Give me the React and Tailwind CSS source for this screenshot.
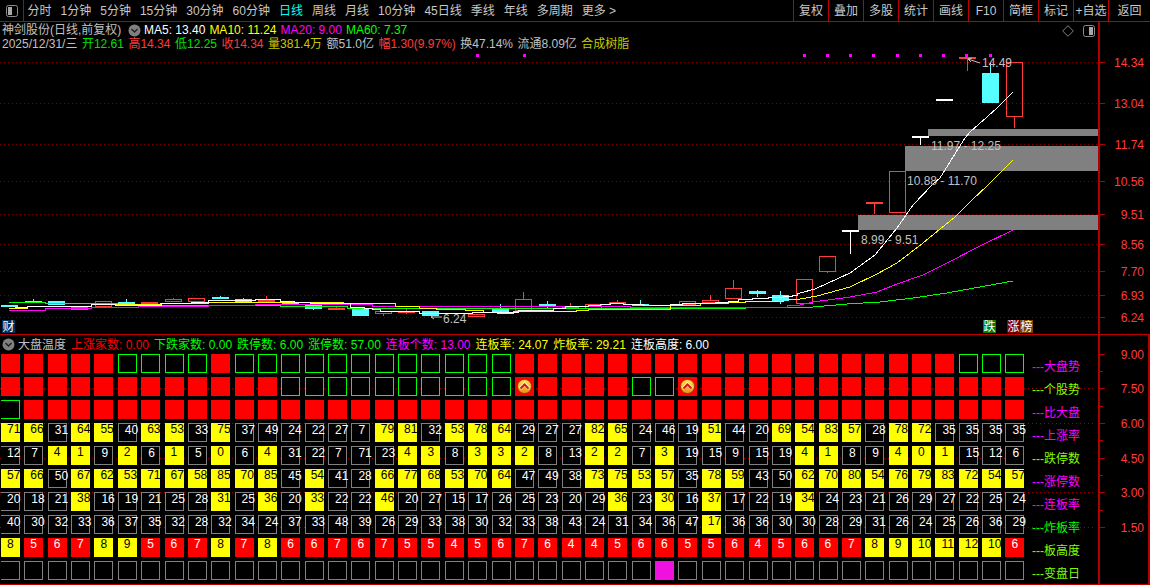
import React from 'react';

const leftTabs = ['分时', '1分钟', '5分钟', '15分钟', '30分钟', '60分钟', '日线', '周线', '月线', '10分钟', '45日线', '季线', '年线', '多周期', '更多 >'];
const rightTabs = ['复权', '叠加', '多股', '统计', '画线', 'F10', '简框', '标记', '+自选'];

const priceTicks = [
    ['14.34', 62], ['13.04', 103], ['11.74', 144], ['10.56', 181], ['9.51', 214],
    ['8.56', 244], ['7.70', 271], ['6.93', 295], ['6.24', 317],
];

// x, top, bottom, kind (c cyan, h hollow red, f filled red, w white), wick top, wick bottom
const candles = [
    [1, 305, 307, 'c'], [25, 301, 302.5, 'c', 299], [48, 301, 305, 'c'], [71, 307, 310, 'f'], [95, 301, 307, 'h'],
    [118, 302, 304.5, 'c', 299], [141, 302, 304.5, 'f'], [165, 299, 302, 'h', 298], [188, 298, 302, 'h'],
    [212, 297, 299, 'c', 296], [235, 299, 302, 'c', 298], [258, 300, 302, 'h', 296], [282, 302, 304.5, 'c'],
    [305, 305, 309, 'c', null, 310], [328, 308, 309, 'f', 306], [352, 309, 316, 'c'], [375, 311, 314, 'h', null, 316],
    [398, 311, 311.5, 'f', 309, 314], [422, 311, 316, 'c'], [468, 314, 317, 'h'], [492, 307.5, 312, 'c', 304],
    [515, 299, 311, 'h', 292], [539, 304, 305, 'c', 301, 309], [562, 307, 309, 'f', 303], [585, 304, 309, 'h'],
    [609, 302, 304, 'h', 300], [632, 304, 306, 'c', 300], [679, 301, 305, 'h'], [702, 300, 303, 'h', 295],
    [725, 288, 299, 'h', 280], [749, 291, 294, 'c', 290, 297], [772, 295, 301, 'c', 291, 304], [796, 279, 304, 'h'],
    [819, 256, 272, 'h', null, 273], [842, 230, 231, 'w', null, 254], [866, 202, 203, 'f', null, 214],
    [889, 171, 213, 'h'], [912, 136, 137, 'w', null, 145], [936, 99, 100, 'w'], [959, 57, 59, 'f', null, 71],
    [982, 73, 103, 'c', 62], [1006, 62, 117, 'h', null, 128],
];

// stepped part of the moving averages: [x end, y]
const stepped = (start, steps) => {
    let pts = [];
    let x = start;
    steps.forEach(([end, y]) => {
        pts.push(`${x},${y}`, `${end},${y}`);
        x = end;
    });
    return pts.join(' ');
};

const maWhite = stepped(15, [[27, 307], [91, 306], [115, 304], [161, 305], [179, 303], [191, 303], [208, 302], [255, 300], [280, 299], [294, 301], [310, 302], [350, 303], [364, 307], [372, 308], [380, 309], [395, 311], [419, 311], [436, 313], [472, 313], [518, 312], [553, 310], [565, 308], [588, 306], [600, 305], [610, 304], [623, 303], [643, 304], [670, 305], [682, 304], [715, 303], [728, 302], [738, 301], [752, 299], [768, 298], [783, 297], [792, 296], [797, 295], [800, 293]]) +
    ' 815,289 850,273 875,255 897,228 913,205 932,185 940,178 953,157 965,138 970,132 987,117 997,108 1013,92';
const maYellow = stepped(9, [[27, 308], [91, 306], [160, 304], [208, 303], [343, 302], [395, 303], [419, 306], [436, 308], [465, 309], [483, 310], [497, 312], [513, 313], [576, 311], [588, 310], [670, 309], [700, 305], [728, 303], [745, 302], [783, 301], [800, 299]]) +
    ' 817,296 850,287 877,274 897,263 923,243 940,229 955,217 972,200 988,185 1013,160';
const maPink = stepped(9, [[21, 310], [45, 310], [71, 308], [91, 308], [138, 307], [208, 306], [255, 305], [372, 304], [442, 306], [512, 306], [630, 306], [745, 307], [787, 307], [800, 305]]) +
    ' 813,302 850,297 877,292 897,284 923,275 947,263 980,246 1013,230';
const maGreen = stepped(9, [[45, 302], [117, 303], [160, 304], [280, 305], [347, 306], [600, 308], [745, 308], [800, 307]]) +
    ' 813,307 847,304 880,302 913,298 947,293 980,287 1013,281';

const sky = 'rrrrrggggrggggggggggggrrrrrrrrrrrrrrrrrrrggg';
const stock = 'rrrrrrrrrrrrggggggggggrrrrrggrrrrrrrrrrrrrrr';
const market = 'grrrrrrrrrrrrrrrrrrrrrrrrrrrrrrrrrrrrrrrrrrr';

const numberRows = [
    '71y 66y 31 64y 55y 40 63y 53y 33 75y 37 49 24 22 27 7 79y 81y 32 53y 78y 64y 29 27 27 82y 65y 24 46 19 51y 44 20 69y 54y 83y 57y 28 78y 72y 35 35 35 35',
    '12 7 4y 1y 9 2y 6 1y 5 0y 6 4y 31 22 7 71 23 4y 3y 8 3y 3y 2y 8 13 2y 2y 7 3y 19 15 9 15 19 4y 1y 8 9 4y 0y 1y 15 12 6',
    '57y 66y 50 67y 62y 53y 71y 67y 58y 85y 70y 85y 45 54y 41 28 66y 77y 68y 53y 70y 64y 47 49 38 73y 75y 53y 57y 35 78y 59y 43 50 62y 70y 80y 54y 76y 79y 83y 72y 54y 57y',
    '20 18 21 38y 16 19 21 25 28 31y 25 36y 20 33y 22 22 46y 20 27 15 17 26 25 23 20 29 36y 23 30y 16 37y 17 22 19 34y 24 23 21 26 29 27 22 25 24',
    '40 30 32 33 36 37 35 32 28 32 34 24 37 33 48 39 26 29 33 38 30 32 33 38 43 24 31 34 36 47 17y 36 36 30 30 28 29 31 26 24 25 26 36 29',
];
const heightRow = '8y 5 6 7 8y 9y 5 6 7 8y 7 8y 6 6 7 6 7 5 5 4 5 6 7 6 4 4 5 6 6 5 5 6 4 5 6 6 7 8y 9y 10y 11y 12y 10y 6';

const rowLabels = [
    ['大盘势', 'text-[#ff00ff]'], ['个股势', 'text-[#80ff00]'], ['比大盘', 'text-[#ff00ff]'], ['上涨率', 'text-[#ff00ff]'],
    ['跌停数', 'text-[#80ff00]'], ['涨停数', 'text-[#ff00ff]'], ['连板率', 'text-[#ff00ff]'], ['炸板率', 'text-[#00ff00]'],
    ['板高度', 'text-[#80ff00]'], ['变盘日', 'text-[#80ff00]'],
];

const headerStats = [
    ['上涨家数: 0.00', 'text-[#ff0000]'], ['下跌家数: 0.00', 'text-[#00ff00]'], ['跌停数: 6.00', 'text-[#00ff00]'],
    ['涨停数: 57.00', 'text-[#00ff00]'], ['连板个数: 13.00', 'text-[#ff00ff]'], ['连板率: 24.07', 'text-[#ffff00]'],
    ['炸板率: 29.21', 'text-[#ffff00]'], ['连板高度: 6.00', 'text-white'],
];

const cellStyles = {
    r: 'bg-[#ff0000] text-white',
    g: 'bg-black border border-[#00ff00]',
    y: 'bg-[#ffff00] text-black',
    n: 'bg-black border border-[#808080] text-white',
    m: 'bg-[#f010e0]',
};

const DropCircle = () => (
    <svg width="13" height="13" viewBox="0 0 13 13" className="shrink-0">
        <circle cx="6.5" cy="6.5" r="6" fill="#808080" />
        <path d="M3.5 5 L6.5 8 L9.5 5" fill="none" stroke="#222" strokeWidth="1.5" />
    </svg>
);

const PanelIcon = ({ side }) => (
    <svg width="12" height="12" viewBox="0 0 12 12" className="shrink-0">
        <rect x="0.5" y="0.5" width="11" height="11" rx="2" fill="none" stroke="#8c8c8c" />
        <rect x={side === 'left' ? 2 : 6} y="2" width="4" height="8" fill="#a8a8a8" />
    </svg>
);

const UpBadge = () => (
    <svg width="15" height="15" viewBox="0 0 15 15">
        <defs>
            <linearGradient id="upBadge" x1="0" y1="0" x2="0" y2="1">
                <stop offset="0" stopColor="#ffe94a" />
                <stop offset="1" stopColor="#f08a10" />
            </linearGradient>
        </defs>
        <circle cx="7.5" cy="7.5" r="7" fill="url(#upBadge)" stroke="#5a3000" strokeWidth="0.6" />
        <path d="M3 9.5 L7.5 5 L12 9.5" fill="none" stroke="#fff2c0" strokeWidth="3.2" />
        <path d="M3.5 9.5 L7.5 5.5 L11.5 9.5" fill="none" stroke="#d01818" strokeWidth="2" />
    </svg>
);

const TopBar = () => (
    <div className="flex h-[22px] shrink-0 border-b border-[#c00000] text-[#c8c8c8]">
        <div className="flex w-[24px] items-center justify-center border-r border-[#c00000]">
            <PanelIcon side="left" />
        </div>
        <div className="flex items-center gap-[9px] pl-[3.5px]">
            {leftTabs.map((t) => (
                <span key={t} className={t === '日线' ? 'text-[#00ffff]' : ''}>{t}</span>
            ))}
        </div>
        <div className="ml-auto flex">
            {rightTabs.map((t) => (
                <div key={t} className="flex w-[35px] items-center justify-center border-l border-[#c00000]">{t}</div>
            ))}
            <div className="flex w-[42px] items-center justify-center border-l border-[#c00000]">返回</div>
        </div>
    </div>
);

const PriceChart = () => (
    <svg width="1098" height="312" viewBox="0 22 1098 312" className="absolute inset-0" shapeRendering="crispEdges">
        {priceTicks.map(([t, y]) => (
            <line key={t} x1="0" x2="1098" y1={y + 0.5} y2={y + 0.5} stroke="#780000" strokeDasharray="1 3" />
        ))}
        <rect x="928" y="129" width="170" height="7" fill="#808080" />
        <rect x="905" y="146" width="193" height="25" fill="#808080" />
        <rect x="858" y="215" width="240" height="15" fill="#808080" />
        {candles.map(([x, top, bottom, kind, wickTop, wickBottom]) => {
            const color = kind === 'c' ? '#55ffff' : kind === 'w' ? '#ffffff' : '#ff3c3c';
            const mid = x + 8.5;
            return (
                <g key={x}>
                    {wickTop != null && <line x1={mid} x2={mid} y1={wickTop} y2={top} stroke={color} />}
                    {wickBottom != null && <line x1={mid} x2={mid} y1={bottom} y2={wickBottom} stroke={color} />}
                    <rect
                        x={x + 0.5}
                        y={top + 0.5}
                        width="16"
                        height={Math.max(bottom - top - 1, 0.5)}
                        fill={kind === 'h' ? 'none' : color}
                        stroke={color}
                    />
                </g>
            );
        })}
        <polyline points={maGreen} fill="none" stroke="#00ff00" />
        <polyline points={maPink} fill="none" stroke="#ff00ff" />
        <polyline points={maYellow} fill="none" stroke="#ffff00" />
        <polyline points={maWhite} fill="none" stroke="#ffffff" />
        {[477, 524, 804, 827, 850, 873, 897, 920, 943, 966, 990].map((x) => (
            <rect key={x} x={x - 1.5} y="54" width="3" height="3" fill="#ff00ff" />
        ))}
        <g fill="#c0c0c0" fontSize="12" shapeRendering="auto">
            <path d="M968 59 L972 58 M968 59 L971 62 M968 59 L980 63" stroke="#c0c0c0" fill="none" />
            <text x="982" y="67">14.49</text>
            <text x="931" y="150">11.97 - 12.25</text>
            <text x="907" y="185">10.88 - 11.70</text>
            <text x="861" y="244">8.99 - 9.51</text>
            <path d="M431 317 L442 317 M431 317 L434 315 M431 317 L434 319" stroke="#c0c0c0" fill="none" />
            <text x="443" y="323">6.24</text>
        </g>
    </svg>
);

const Badge = ({ className, children }) => (
    <span className={`flex h-[13px] w-[13px] items-center justify-center text-[12px] leading-none text-white ${className}`}>{children}</span>
);

const PricePanel = () => (
    <div className="flex h-[312px] shrink-0">
        <div className="relative w-[1098px] shrink-0">
            <PriceChart />
            <div className="relative flex flex-col pl-[2px] pt-[1px] leading-[14px]">
                <div className="flex h-[14px] items-center">
                    <span className="w-[126px] shrink-0 text-[#c0c0c0]">神剑股份(日线,前复权)</span>
                    <DropCircle />
                    <div className="flex gap-[4px] pl-[3px]">
                        <span className="text-white">MA5: 13.40</span>
                        <span className="text-[#ffff00]">MA10: 11.24</span>
                        <span className="text-[#ff00ff]">MA20: 9.00</span>
                        <span className="text-[#00ff00]">MA60: 7.37</span>
                    </div>
                </div>
                <div className="flex h-[14px] items-center gap-[4.5px] whitespace-nowrap">
                    <span className="text-[#c0c0c0]">2025/12/31/三</span>
                    <span className="text-[#00e000]">开12.61</span>
                    <span className="text-[#ff3c3c]">高14.34</span>
                    <span className="text-[#00e000]">低12.25</span>
                    <span className="text-[#ff3c3c]">收14.34</span>
                    <span className="text-[#c8c800]">量381.4万</span>
                    <span className="text-[#c0c0c0]">额51.0亿</span>
                    <span className="text-[#ff3c3c]">幅1.30(9.97%)</span>
                    <span className="text-[#c0c0c0]">换47.14%</span>
                    <span className="text-[#c0c0c0]">流通8.09亿</span>
                    <span className="text-[#c8c800]">合成树脂</span>
                </div>
            </div>
            <div className="absolute left-[1062px] top-[3px] flex items-center gap-[9px]">
                <svg width="12" height="12" viewBox="0 0 12 12">
                    <path d="M6 0.7 L11.3 6 L6 11.3 L0.7 6 Z" fill="none" stroke="#808080" />
                </svg>
                <PanelIcon side="right" />
            </div>
            <div className="absolute left-[2px] bottom-[1px]"><Badge className="bg-[#003060]">财</Badge></div>
            <div className="absolute left-[983px] bottom-[1px] flex">
                <Badge className="bg-[#008000]">跌</Badge>
                <span className="w-[11px]" />
                <Badge className="bg-[#800000]">涨</Badge>
                <Badge className="bg-[#804000]">榜</Badge>
            </div>
        </div>
        <div className="relative flex-1 border-l-2 border-[#b00000]">
            {priceTicks.map(([t, y]) => (
                <div key={t}>
                    <div className="absolute left-0 h-px w-[5px] bg-[#b00000]" style={{ top: y - 22 }} />
                    <span className="absolute right-[6px] leading-[12px] text-[#ff3c3c]" style={{ top: y - 27 }}>{t}</span>
                </div>
            ))}
        </div>
    </div>
);

const Cell = ({ kind, value, first, badge }) => (
    <div className={`relative box-border flex h-[19px] w-[19px] whitespace-nowrap pl-[6px] leading-[12px] ${cellStyles[kind] || ''} ${first ? 'border-l-0' : ''}`}>
        {value}
        {badge && (
            <span className="absolute inset-0 flex items-center justify-center"><UpBadge /></span>
        )}
    </div>
);

const BreadthGrid = () => {
    const parse = (s, plain) => s.split(' ').map((v) => ({
        kind: v.endsWith('y') ? 'y' : plain,
        value: v.replace('y', ''),
    }));
    const rows = [
        [...sky].map((kind) => ({ kind })),
        [...stock].map((kind, i) => ({ kind, badge: i === 22 || i === 29 })),
        [...market].map((kind) => ({ kind })),
        ...numberRows.map((s) => parse(s, 'n')),
        parse(heightRow, 'r'),
        Array.from({ length: 44 }, (_, i) => ({ kind: i === 28 ? 'm' : 'n' })),
    ];
    return (
        <div className="relative grid w-[1029px] shrink-0 grid-cols-[repeat(44,23.36px)] auto-rows-[19px] gap-y-[4px] pl-[1px]">
            {rows.flatMap((row, r) => row.map((c, i) => (
                <Cell key={`${r}-${i}`} {...c} first={i === 0} />
            )))}
        </div>
    );
};

const BreadthPanel = () => {
    const dots = [[53, 'right-[3px]'], [88, 'right-[3px]'], [123, 'right-[74px]'], [157, 'right-[3px]'], [192, 'right-[3px]']];
    const ticks = [[19, 5], [36, 3], [53, 5], [71, 3], [88, 5], [105, 3], [123, 5], [140, 3], [157, 5], [175, 3], [192, 5]];
    const labels = [['9.00', 19], ['7.50', 53], ['6.00', 88], ['4.50', 123], ['3.00', 157], ['1.50', 192]];
    return (
        <div className="flex h-[251px] shrink-0 border-y border-[#c00000]">
            <div className="relative w-[1098px] shrink-0">
                {dots.map(([y, cls]) => (
                    <div
                        key={y}
                        className={`absolute left-0 h-px bg-[repeating-linear-gradient(90deg,#a00000_0_1px,transparent_1px_4px)] ${cls}`}
                        style={{ top: y }}
                    />
                ))}
                <div className="relative flex h-[19px] items-center whitespace-nowrap">
                    <div className="flex items-center gap-[3px] pl-[2px] pr-[5px] text-[#c0c0c0]">
                        <DropCircle />
                        <span>大盘温度</span>
                    </div>
                    <div className="flex gap-[5px]">
                        {headerStats.map(([t, color]) => (
                            <span key={t} className={color}>{t}</span>
                        ))}
                    </div>
                </div>
                <div className="flex">
                    <BreadthGrid />
                    <div className="relative flex flex-col pl-[3px] pt-[2px]">
                        {rowLabels.map(([t, color]) => (
                            <span key={t} className={`h-[23px] leading-[23px] whitespace-nowrap ${color}`}>---{t}</span>
                        ))}
                    </div>
                </div>
            </div>
            <div className="relative flex-1 border-x-2 border-[#b00000]">
                {ticks.map(([y, w]) => (
                    <div key={y} className={`absolute left-0 h-px bg-[#b00000] ${w === 5 ? 'w-[5px]' : 'w-[3px]'}`} style={{ top: y }} />
                ))}
                {labels.map(([t, y]) => (
                    <span key={t} className="absolute right-[4px] leading-[12px] text-[#ff3c3c]" style={{ top: y - 5 }}>{t}</span>
                ))}
            </div>
        </div>
    );
};

const App = () => (
    <div className="flex h-[585px] w-[1150px] flex-col overflow-hidden bg-black font-['Liberation_Sans','Noto_Sans_CJK_SC',sans-serif] text-[12px]">
        <TopBar />
        <PricePanel />
        <BreadthPanel />
    </div>
);

export default App;
